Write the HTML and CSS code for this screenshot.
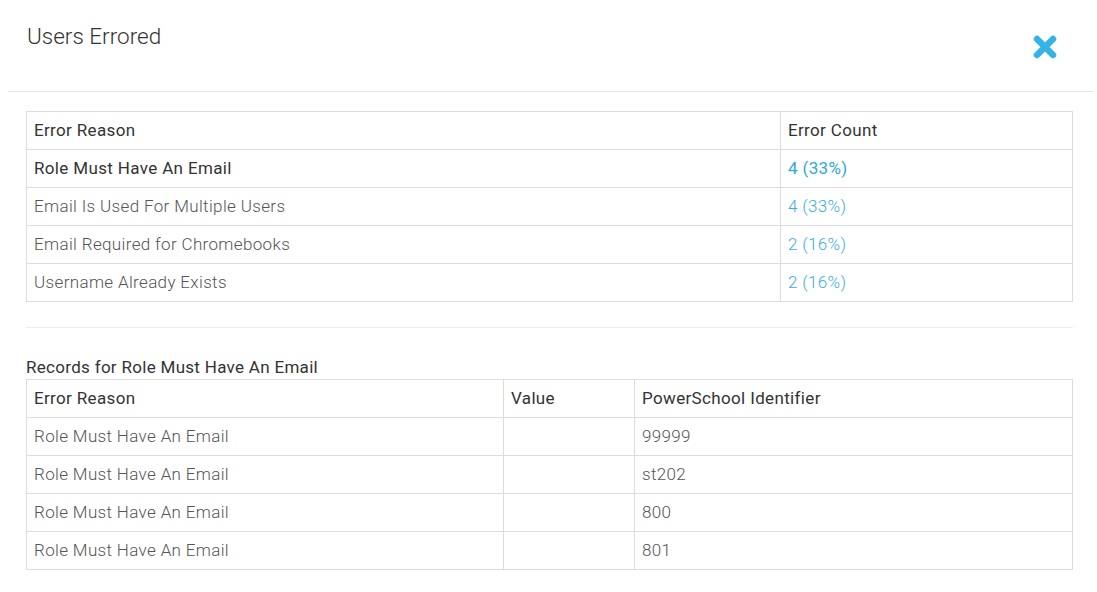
FILE: index.html
```html
<!DOCTYPE html>
<html lang="en">
  <head>
    <meta charset="UTF-8" />
    <meta name="viewport" content="width=device-width, initial-scale=1.0" />
    <title>Users Errored</title>
    <link rel="stylesheet" href="styles.css">
  </head>
  <body>
    <div class="modal">
      <div class="modal-header">
        <p class="modal-title">Users Errored</p>
        <button class="close-button" title="Close">
          <svg width="26" height="26" viewBox="0 0 26 26">
            <path d="M5 5 L21 21 M21 5 L5 21" stroke="#35b3e6" stroke-width="6.5" stroke-linecap="round" fill="none"/>
          </svg>
        </button>
      </div>

      <div class="modal-body">
        <table class="error-table">
          <thead>
            <tr>
              <th class="reason-col">Error Reason</th>
              <th>Error Count</th>
            </tr>
          </thead>
          <tbody>
            <tr class="selected">
              <td>Role Must Have An Email</td>
              <td class="count">4 (33%)</td>
            </tr>
            <tr>
              <td>Email Is Used For Multiple Users</td>
              <td class="count">4 (33%)</td>
            </tr>
            <tr>
              <td>Email Required for Chromebooks</td>
              <td class="count">2 (16%)</td>
            </tr>
            <tr>
              <td>Username Already Exists</td>
              <td class="count">2 (16%)</td>
            </tr>
          </tbody>
        </table>

        <hr class="divider">

        <p class="records-title">Records for Role Must Have An Email</p>
        <table class="records-table">
          <thead>
            <tr>
              <th class="reason-col">Error Reason</th>
              <th class="value-col">Value</th>
              <th>PowerSchool Identifier</th>
            </tr>
          </thead>
          <tbody>
            <tr><td>Role Must Have An Email</td><td></td><td>99999</td></tr>
            <tr><td>Role Must Have An Email</td><td></td><td>st202</td></tr>
            <tr><td>Role Must Have An Email</td><td></td><td>800</td></tr>
            <tr><td>Role Must Have An Email</td><td></td><td>801</td></tr>
          </tbody>
        </table>
      </div>
    </div>
  </body>
</html>
```

FILE: styles.css
```css
body{
  margin: 0 4px 0 8px;
  background-color: white;
  color: #333;
  font-family: Roboto, "Liberation Sans", sans-serif;
}

.modal-header{
  display: flex;
  justify-content: space-between;
  align-items: flex-start;
  height: 91px;
  border-bottom: 1px solid #e5e5e5;
  padding: 0 35px 0 19px;
}

.modal-title{
  margin: 21px 0 0 0;
  font-size: 22.5px;
  font-weight: 300;
  line-height: 30px;
  color: #333;
}

.close-button{
  background-color: transparent;
  border: none;
  padding: 0;
  margin-top: 34px;
  cursor: pointer;
}

.close-button svg{
  display: block;
}

.modal-body{
  padding: 19px 20px 0 18px;
}

table{
  width: 100%;
  border-collapse: collapse;
  font-size: 17px;
  letter-spacing: 0.35px;
}

th,
td{
  border: 1px solid #ddd;
  padding: 8px 7px;
  line-height: 21px;
  text-align: left;
  vertical-align: top;
}

th{
  font-weight: 400;
  color: #333;
}

td{
  font-weight: 300;
  color: #555;
}

.error-table .reason-col{
  width: 739px;
}

.count{
  color: #3badE4;
}

.selected td{
  font-weight: 400;
  color: #333;
}

.selected td.count{
  color: #2ea9e1;
}

.divider{
  border: none;
  border-top: 1px solid #eee;
  margin: 25px 0 29px 0;
}

.records-title{
  margin: 0 0 2px 0;
  font-size: 17px;
  letter-spacing: 0.3px;
  line-height: 20px;
  color: #333;
}

.records-table .reason-col{
  width: 462px;
}

.records-table .value-col{
  width: 116px;
}
```
